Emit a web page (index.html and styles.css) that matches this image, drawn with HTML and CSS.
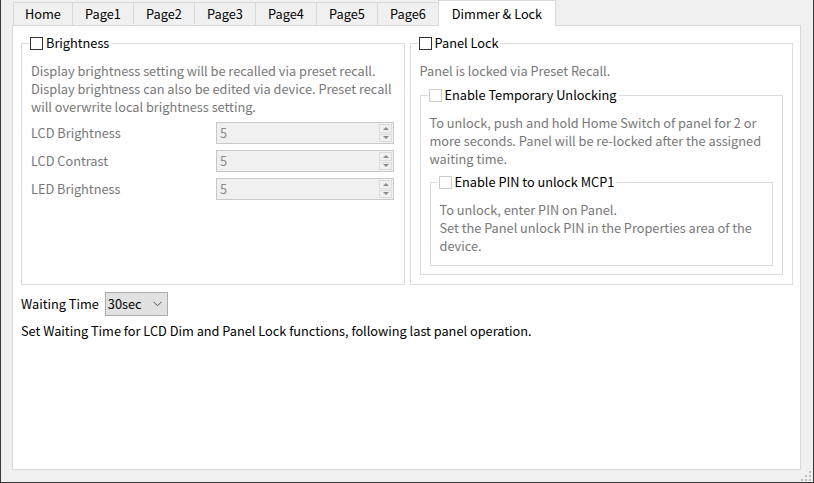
FILE: index.html
```html
<!DOCTYPE html>
<html lang="en">
<head>
  <meta charset="UTF-8">
  <meta name="viewport" content="width=device-width, initial-scale=1.0">
  <title>Dimmer &amp; Lock</title>
  <link rel="stylesheet" href="styles.css">
</head>
<body>
  <div class="window">
    <div class="tabs">
      <div class="tab">Home</div>
      <div class="tab">Page1</div>
      <div class="tab">Page2</div>
      <div class="tab">Page3</div>
      <div class="tab">Page4</div>
      <div class="tab">Page5</div>
      <div class="tab">Page6</div>
      <div class="tab active">Dimmer &amp; Lock</div>
    </div>

    <div class="pane">
      <div class="groups">
        <fieldset class="group">
          <legend><span class="check"></span>Brightness</legend>
          <p class="note">Display brightness setting will be recalled via preset recall.<br>Display brightness can also be edited via device. Preset recall will overwrite local brightness setting.</p>
          <div class="rows">
            <div class="row">
              <span class="label">LCD Brightness</span>
              <div class="spin"><span class="value">5</span><span class="arrows"><span class="up"></span><span class="down"></span></span></div>
            </div>
            <div class="row">
              <span class="label">LCD Contrast</span>
              <div class="spin"><span class="value">5</span><span class="arrows"><span class="up"></span><span class="down"></span></span></div>
            </div>
            <div class="row">
              <span class="label">LED Brightness</span>
              <div class="spin"><span class="value">5</span><span class="arrows"><span class="up"></span><span class="down"></span></span></div>
            </div>
          </div>
        </fieldset>

        <fieldset class="group">
          <legend><span class="check"></span>Panel Lock</legend>
          <p class="note">Panel is locked via Preset Recall.</p>
          <fieldset class="group sub">
            <legend><span class="check off"></span>Enable Temporary Unlocking</legend>
            <p class="note">To unlock, push and hold Home Switch of panel for 2 or more seconds. Panel will be re-locked after the assigned waiting time.</p>
            <fieldset class="group sub pin">
              <legend><span class="check off"></span>Enable PIN to unlock MCP1</legend>
              <p class="note">To unlock, enter PIN on Panel.<br>Set the Panel unlock PIN in the Properties area of the device.</p>
            </fieldset>
          </fieldset>
        </fieldset>
      </div>

      <div class="waiting">
        <span>Waiting Time</span>
        <div class="select">30sec
          <svg width="9" height="6" viewBox="0 0 9 6"><path d="M0.5 0.8 L4.5 4.8 L8.5 0.8" fill="none" stroke="#555" stroke-width="1"/></svg>
        </div>
      </div>
      <p class="hint">Set Waiting Time for LCD Dim and Panel Lock functions, following last panel operation.</p>
    </div>

    <svg class="grip" width="10" height="10" viewBox="0 0 10 10">
      <rect x="8" y="0" width="2" height="2" fill="#bdbdbd"/>
      <rect x="4" y="4" width="2" height="2" fill="#bdbdbd"/>
      <rect x="8" y="4" width="2" height="2" fill="#bdbdbd"/>
      <rect x="0" y="8" width="2" height="2" fill="#bdbdbd"/>
      <rect x="4" y="8" width="2" height="2" fill="#bdbdbd"/>
      <rect x="8" y="8" width="2" height="2" fill="#bdbdbd"/>
    </svg>
  </div>
</body>
</html>
```

FILE: styles.css
```css
body {
  margin: 0;
  padding: 0;
  background: #f0f0f0;
  font-family: "Noto Sans CJK JP", "Noto Sans", sans-serif;
  font-size: 12.75px;
  line-height: 18px;
  color: #000;
}

.window {
  height: 100vh;
  box-sizing: border-box;
  border-left: 1px solid #3a3a3a;
  border-right: 1px solid #3a3a3a;
  border-bottom: 1px solid #3a3a3a;
  display: flex;
  flex-direction: column;
  position: relative;
}

/* tabs */
.tabs {
  display: flex;
  align-items: flex-end;
  height: 25px;
  padding-left: 12px;
}

.tab {
  height: 22px;
  width: 58px;
  margin-right: -1px;
  border: 1px solid #d9d9d9;
  border-bottom: none;
  background: #f0f0f0;
  display: flex;
  align-items: center;
  justify-content: center;
  color: #000;
}

.tab + .tab {
  width: 60px;
}

.tab.active {
  width: 116px;
  height: 25px;
  margin-bottom: -1px;
  background: #fff;
  position: relative;
  z-index: 1;
}

.pane {
  flex: 1;
  margin: 0 12px 12px 11px;
  border: 1px solid #d9d9d9;
  background: #fff;
  padding: 8px 7px 0 8px;
}

/* group boxes */
.groups {
  display: flex;
  gap: 5px;
}

.group {
  flex: 1;
  min-width: 0;
  margin: 0;
  padding: 10px 9px 9px 9px;
  border: 1px solid #dcdcdc;
}

.group legend {
  margin-left: -2px;
  padding: 0 2px 0 1px;
  display: flex;
  align-items: center;
  gap: 3px;
  line-height: 18px;
}

.check {
  width: 11px;
  height: 11px;
  border: 1px solid #333;
  background: #fff;
}

.check.off {
  border-color: #cccccc;
}

.note {
  margin: 0;
  color: #787878;
}

.sub {
  margin-top: 6px;
  padding-bottom: 8px;
}

.pin {
  margin-top: 5px;
  padding-bottom: 10px;
}

.rows {
  margin-top: 6px;
  display: flex;
  flex-direction: column;
  gap: 6px;
}

.row {
  display: flex;
  align-items: center;
}

.label {
  width: 185px;
  color: #787878;
}

.spin {
  width: 176px;
  height: 20px;
  border: 1px solid #c9c9c9;
  background: #f0f0f0;
  display: flex;
  align-items: center;
  justify-content: space-between;
  color: #8a8a8a;
}

.value {
  padding-left: 3px;
}

.arrows {
  width: 13px;
  height: 18px;
  margin-right: 1px;
  display: flex;
  flex-direction: column;
  gap: 1px;
}

.arrows span {
  flex: 1;
  border: 1px solid #dcdcdc;
  display: flex;
  align-items: center;
  justify-content: center;
}

.up::after {
  content: "";
  border-left: 3px solid transparent;
  border-right: 3px solid transparent;
  border-bottom: 3px solid #8a8a8a;
}

.down::after {
  content: "";
  border-left: 3px solid transparent;
  border-right: 3px solid transparent;
  border-top: 3px solid #8a8a8a;
}

/* waiting time */
.waiting {
  margin-top: 7px;
  display: flex;
  align-items: center;
  gap: 6px;
}

.select {
  width: 54px;
  height: 22px;
  padding: 0 5px 0 2px;
  border: 1px solid #adadad;
  background: #e1e1e1;
  display: flex;
  align-items: center;
  justify-content: space-between;
}

.hint {
  margin: 6px 0 0;
}

.grip {
  position: absolute;
  right: 2px;
  bottom: 1px;
}
```
